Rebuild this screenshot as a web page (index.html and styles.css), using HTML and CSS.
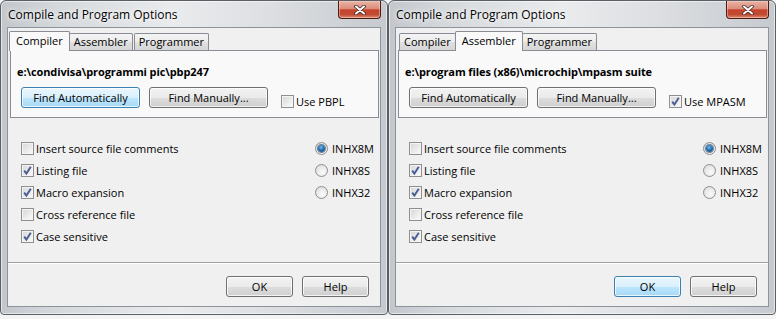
FILE: index.html
```html
<!DOCTYPE html>
<html>
<head>
<meta charset="utf-8">
<title>Compile and Program Options</title>
<link rel="stylesheet" href="styles.css">
</head>
<body>
<div class="screen">
  <div class="dialog">
    <div class="titlebar">
      <span class="title">Compile and Program Options</span>
      <div class="close"><svg width="12" height="10" viewBox="0 0 12 10"><path d="M2 1.5 L10 8.5 M10 1.5 L2 8.5" stroke="#3a2a28" stroke-width="3.6" stroke-linecap="round"/><path d="M2 1.5 L10 8.5 M10 1.5 L2 8.5" stroke="#fff" stroke-width="2" stroke-linecap="round"/></svg></div>
    </div>
    <div class="client">
      <div class="tabs">
        <div class="tab active">Compiler</div>
        <div class="tab">Assembler</div>
        <div class="tab">Programmer</div>
      </div>
      <div class="panel">
        <div class="path">e:\condivisa\programmi pic\pbp247</div>
        <div class="btnrow">
          <button class="btn wide focus">Find Automatically</button>
          <button class="btn wide">Find Manually...</button>
          <div class="check inline"><span class="box"></span><span>Use PBPL</span></div>
        </div>
      </div>
      <div class="options">
        <div class="checks">
          <div class="check row"><span class="box"></span><span>Insert source file comments</span></div>
          <div class="check row"><span class="box checked"><svg width="11" height="11" viewBox="0 0 11 11"><path d="M2.2 5.6 L4.4 8.6 L8.8 1.8" fill="none" stroke="#4a5d93" stroke-width="1.9"/></svg></span><span>Listing file</span></div>
          <div class="check row"><span class="box checked"><svg width="11" height="11" viewBox="0 0 11 11"><path d="M2.2 5.6 L4.4 8.6 L8.8 1.8" fill="none" stroke="#4a5d93" stroke-width="1.9"/></svg></span><span>Macro expansion</span></div>
          <div class="check row"><span class="box"></span><span>Cross reference file</span></div>
          <div class="check row"><span class="box checked"><svg width="11" height="11" viewBox="0 0 11 11"><path d="M2.2 5.6 L4.4 8.6 L8.8 1.8" fill="none" stroke="#4a5d93" stroke-width="1.9"/></svg></span><span>Case sensitive</span></div>
        </div>
        <div class="radios">
          <div class="radio row"><span class="dot on"></span><span>INHX8M</span></div>
          <div class="radio row"><span class="dot"></span><span>INHX8S</span></div>
          <div class="radio row"><span class="dot"></span><span>INHX32</span></div>
        </div>
      </div>
      <div class="sep"></div>
      <div class="footer">
        <button class="btn small">OK</button>
        <button class="btn small">Help</button>
      </div>
    </div>
  </div>

  <div class="dialog">
    <div class="titlebar">
      <span class="title">Compile and Program Options</span>
      <div class="close"><svg width="12" height="10" viewBox="0 0 12 10"><path d="M2 1.5 L10 8.5 M10 1.5 L2 8.5" stroke="#3a2a28" stroke-width="3.6" stroke-linecap="round"/><path d="M2 1.5 L10 8.5 M10 1.5 L2 8.5" stroke="#fff" stroke-width="2" stroke-linecap="round"/></svg></div>
    </div>
    <div class="client">
      <div class="tabs">
        <div class="tab">Compiler</div>
        <div class="tab active">Assembler</div>
        <div class="tab">Programmer</div>
      </div>
      <div class="panel">
        <div class="path">e:\program files (x86)\microchip\mpasm suite</div>
        <div class="btnrow">
          <button class="btn wide">Find Automatically</button>
          <button class="btn wide">Find Manually...</button>
          <div class="check inline"><span class="box checked"><svg width="11" height="11" viewBox="0 0 11 11"><path d="M2.2 5.6 L4.4 8.6 L8.8 1.8" fill="none" stroke="#4a5d93" stroke-width="1.9"/></svg></span><span>Use MPASM</span></div>
        </div>
      </div>
      <div class="options">
        <div class="checks">
          <div class="check row"><span class="box"></span><span>Insert source file comments</span></div>
          <div class="check row"><span class="box checked"><svg width="11" height="11" viewBox="0 0 11 11"><path d="M2.2 5.6 L4.4 8.6 L8.8 1.8" fill="none" stroke="#4a5d93" stroke-width="1.9"/></svg></span><span>Listing file</span></div>
          <div class="check row"><span class="box checked"><svg width="11" height="11" viewBox="0 0 11 11"><path d="M2.2 5.6 L4.4 8.6 L8.8 1.8" fill="none" stroke="#4a5d93" stroke-width="1.9"/></svg></span><span>Macro expansion</span></div>
          <div class="check row"><span class="box"></span><span>Cross reference file</span></div>
          <div class="check row"><span class="box checked"><svg width="11" height="11" viewBox="0 0 11 11"><path d="M2.2 5.6 L4.4 8.6 L8.8 1.8" fill="none" stroke="#4a5d93" stroke-width="1.9"/></svg></span><span>Case sensitive</span></div>
        </div>
        <div class="radios">
          <div class="radio row"><span class="dot on"></span><span>INHX8M</span></div>
          <div class="radio row"><span class="dot"></span><span>INHX8S</span></div>
          <div class="radio row"><span class="dot"></span><span>INHX32</span></div>
        </div>
      </div>
      <div class="sep"></div>
      <div class="footer">
        <button class="btn small focus">OK</button>
        <button class="btn small">Help</button>
      </div>
    </div>
  </div>
</div>
</body>
</html>
```

FILE: styles.css
```css
* { box-sizing: border-box; }

body {
  margin: 0;
  background: #f4f4f4;
  font-family: "Open Sans", "Noto Sans", sans-serif;
  font-size: 11px;
  color: #000;
}

.screen {
  display: flex;
  width: 776px;
  height: 319px;
}

.dialog {
  width: 388px;
  height: 315px;
  border: 1px solid #5a5f66;
  border-radius: 6px 6px 4px 4px;
  padding: 0 6px 7px 6px;
  background: linear-gradient(to right, #c3c7cc 0%, #d6d9dc 15%, #e9ebed 45%, #dcdee1 70%, #c6cacf 100%);
  box-shadow: inset 0 0 0 1px rgba(255, 255, 255, 0.55);
  display: flex;
  flex-direction: column;
}

.titlebar {
  height: 26px;
  display: flex;
  align-items: flex-start;
}

.title {
  font-size: 12px;
  line-height: 16px;
  padding-top: 6px;
  margin-left: 1px;
  color: #000;
  text-shadow: 0 0 6px #fff, 0 0 3px #fff;
}

.close {
  margin-left: auto;
  width: 43px;
  height: 18px;
  border: 1px solid #4e1a12;
  border-top: none;
  border-radius: 0 0 4px 4px;
  background: linear-gradient(#e9b3a6 0%, #dc8d7b 45%, #c6432c 52%, #c14a32 80%, #dc8f77 100%);
  box-shadow: inset 0 0 0 1px rgba(255, 220, 210, 0.45);
  display: flex;
  align-items: center;
  justify-content: center;
}

.client {
  flex: 1;
  background: #f0f0f0;
  border: 1px solid #8d939a;
  display: flex;
  flex-direction: column;
}

.tabs {
  display: flex;
  align-items: flex-end;
  height: 19px;
  margin: 3px 0 0 3px;
  position: relative;
  z-index: 1;
}

.tab {
  height: 17px;
  border: 1px solid #898c95;
  border-bottom: none;
  border-radius: 2px 2px 0 0;
  padding: 0 4px;
  margin-right: 1px;
  line-height: 15px;
  font-size: 11px;
  background: linear-gradient(#f4f4f4 0%, #ececec 50%, #e0e0e0 51%, #d6d6d6 100%);
}

.tab.active {
  height: 20px;
  margin: 0 -1px -1px -2px;
  padding: 0 6px;
  line-height: 17px;
  background: #f9f9f9;
  position: relative;
  z-index: 2;
}

.panel {
  height: 68px;
  margin: 0 1px 0 2px;
  border: 1px solid #898c95;
  background: #f9f9f9;
  padding: 13px 0 0 6px;
}

.path {
  font-weight: 700;
  line-height: 15px;
  height: 15px;
  letter-spacing: -0.1px;
}

.btnrow {
  display: flex;
  align-items: flex-end;
  gap: 9px;
  margin: 8px 0 0 4px;
}

.btn {
  height: 21px;
  border: 1px solid #707070;
  border-radius: 3px;
  padding: 0;
  font-family: inherit;
  font-size: 11px;
  color: #000;
  background: linear-gradient(#f2f2f2 0%, #ebebeb 50%, #dddddd 51%, #cfcfcf 100%);
  box-shadow: inset 0 0 0 1px rgba(255, 255, 255, 0.75);
}

.btn.focus {
  border-color: #3c7fb1;
  background: linear-gradient(#eaf6fd 0%, #d9f0fc 50%, #bee6fd 51%, #a7d9f5 100%);
}

.btn.wide { width: 119px; }
.btn.small { width: 67px; }

.check, .radio {
  display: flex;
  align-items: center;
  gap: 2px;
  line-height: 15px;
}

.check.inline {
  margin-left: 4px;
  margin-bottom: -1px;
}

.box {
  width: 13px;
  height: 13px;
  border: 1px solid #8e8f8f;
  background: linear-gradient(135deg, #d6d6d6 0%, #ececec 60%, #fbfbfb 100%);
  box-shadow: inset 0 0 0 1px #f4f4f4;
  display: flex;
  align-items: center;
  justify-content: center;
  flex: none;
}

.options {
  display: flex;
  margin-top: 19px;
  padding-left: 13px;
}

.checks, .radios {
  display: flex;
  flex-direction: column;
}

.row { height: 22px; }

.radios {
  margin-left: auto;
  width: 65px;
}

.radio { gap: 4px; }

.dot {
  width: 13px;
  height: 13px;
  border-radius: 50%;
  border: 1px solid #8e8f8f;
  background: radial-gradient(circle at 60% 65%, #fbfbfb 0%, #e6e6e6 60%, #d2d2d2 100%);
  flex: none;
  display: flex;
  align-items: center;
  justify-content: center;
}

.dot.on::after {
  content: "";
  width: 7px;
  height: 7px;
  border-radius: 50%;
  background: radial-gradient(circle at 45% 35%, #6cbdea 0%, #2a6fae 45%, #123f6e 100%);
  box-shadow: 0 0 0 1px rgba(30, 60, 100, 0.6);
}

.sep {
  margin-top: 15px;
  height: 2px;
  border-top: 1px solid #a0a0a0;
  border-bottom: 1px solid #ffffff;
}

.footer {
  display: flex;
  justify-content: flex-end;
  gap: 9px;
  margin-top: 12px;
  padding-right: 11px;
}
```
